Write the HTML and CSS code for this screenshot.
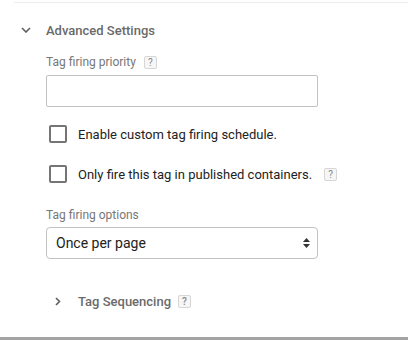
FILE: index.html
```html
<!DOCTYPE html>
<html lang="en">
<head>
  <meta charset="UTF-8" />
  <meta name="viewport" content="width=device-width, initial-scale=1.0" />
  <title>Advanced Settings</title>
  <link rel="stylesheet" href="styles.css">
</head>

<body>
  <div class="panel">
    <div class="section-head">
      <svg class="chevron-down" width="10" height="6" viewBox="0 0 10 6">
        <path d="M1 1 L5 5 L9 1" fill="none" stroke="#5f5f5f" stroke-width="1.6" />
      </svg>
      <span>Advanced Settings</span>
    </div>

    <div class="section-body">
      <div class="field-label">
        <span>Tag firing priority</span>
        <span class="help">?</span>
      </div>
      <input class="text-input" type="text" />

      <label class="check-row first">
        <span class="checkbox"></span>
        <span>Enable custom tag firing schedule.</span>
      </label>

      <label class="check-row">
        <span class="checkbox"></span>
        <span>Only fire this tag in published containers.</span>
        <span class="help wide">?</span>
      </label>

      <div class="field-label options">
        <span>Tag firing options</span>
      </div>
      <div class="select">
        <span>Once per page</span>
        <svg class="arrows" width="7" height="10" viewBox="0 0 7 10">
          <path d="M3.5 0 L7 4 L0 4 Z" fill="#333" />
          <path d="M0 6 L7 6 L3.5 10 Z" fill="#333" />
        </svg>
      </div>

      <div class="sub-head">
        <svg class="chevron-right" width="6" height="9" viewBox="0 0 6 9">
          <path d="M1 1 L4.5 4.5 L1 8" fill="none" stroke="#5f5f5f" stroke-width="1.6" />
        </svg>
        <span>Tag Sequencing</span>
        <span class="help">?</span>
      </div>
    </div>
  </div>

  <div class="divider"></div>
</body>
</html>
```

FILE: styles.css
```css
html,
body {
  height: 100%;
}

body {
  margin: 0;
  display: flex;
  flex-direction: column;
  font-family: Roboto, 'Liberation Sans', sans-serif;
  background: #fff;
  color: #212121;
}

.panel {
  margin: 2px 0 0 14px;
  border-top: 1px solid #ececec;
}

.section-head {
  display: flex;
  align-items: center;
  padding-top: 17px;
  height: 20px;
  font-size: 13px;
  font-weight: 500;
  color: #6a6a6a;
}

.chevron-down {
  margin: 0 15px 0 7px;
}

.section-body {
  padding-left: 32px;
}

.field-label {
  display: flex;
  align-items: center;
  margin-top: 14px;
  height: 16px;
  font-size: 12px;
  color: #777;
}

.help {
  display: inline-flex;
  align-items: center;
  justify-content: center;
  box-sizing: border-box;
  width: 13px;
  height: 13px;
  margin-left: 8px;
  border: 1px solid #d6d6d6;
  border-radius: 2px;
  background: #f6f6f6;
  font-size: 10px;
  color: #888;
}

.help.wide {
  margin-left: 12px;
}

.text-input {
  display: block;
  box-sizing: border-box;
  width: 272px;
  height: 32px;
  margin-top: 5px;
  border: 1px solid #c2c2c2;
  border-radius: 2px;
  outline: none;
}

.check-row {
  display: flex;
  align-items: center;
  height: 24px;
  margin-top: 16px;
  padding-left: 3px;
  font-size: 13px;
  color: #222;
}

.check-row.first {
  margin-top: 15px;
}

.checkbox {
  box-sizing: border-box;
  width: 18px;
  height: 18px;
  margin-right: 11px;
  border: 2px solid #757575;
  border-radius: 2px;
}

.field-label.options {
  margin-top: 21px;
}

.select {
  display: flex;
  align-items: center;
  justify-content: space-between;
  box-sizing: border-box;
  width: 272px;
  height: 32px;
  margin-top: 4px;
  padding: 0 7px 0 9px;
  border: 1px solid #c2c2c2;
  border-radius: 4px;
  font-size: 14px;
  color: #222;
}

.sub-head {
  display: flex;
  align-items: center;
  height: 20px;
  margin-top: 32px;
  padding-left: 9px;
  font-size: 13px;
  font-weight: 500;
  color: #6a6a6a;
}

.chevron-right {
  margin-right: 17px;
}

.sub-head .help {
  margin-left: 7px;
}

.divider {
  margin-top: auto;
  flex: none;
  border-top: 3px solid #a3a3a3;
}
```
